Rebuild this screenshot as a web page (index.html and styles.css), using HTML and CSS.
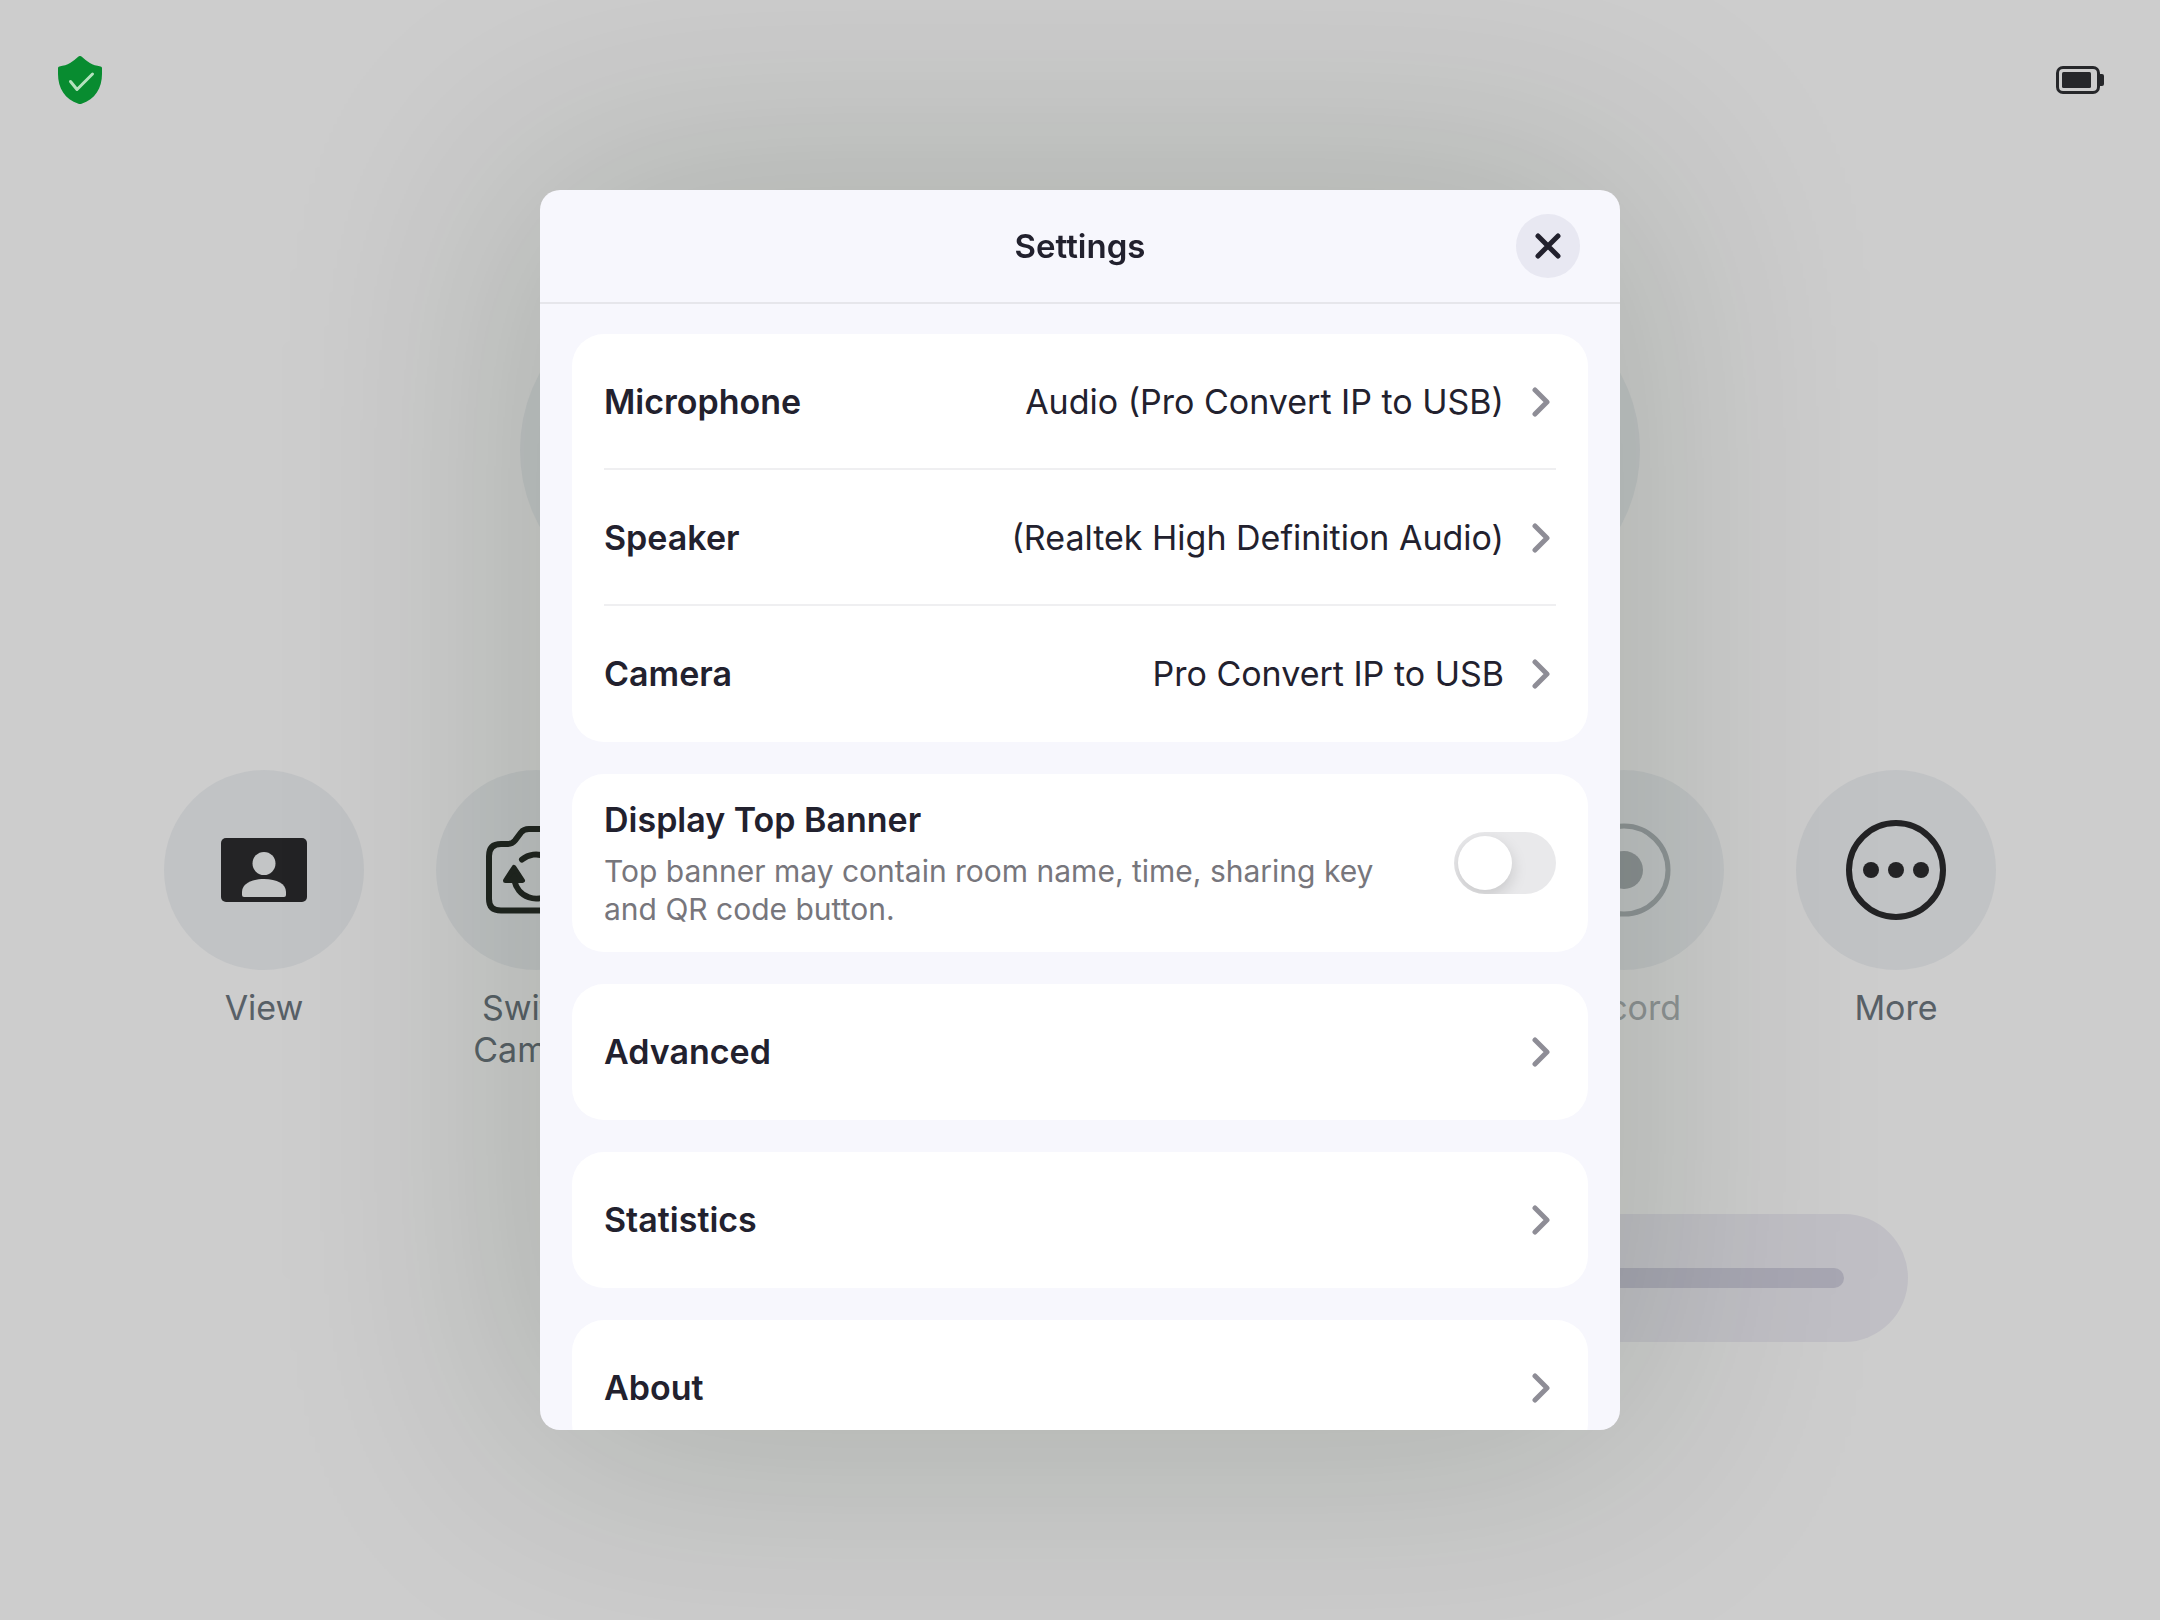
FILE: index.html
```html
<!DOCTYPE html>
<html lang="en">
<head>
<meta charset="utf-8">
<title>Settings</title>
<link rel="stylesheet" href="styles.css">
</head>
<body>
<div class="room">
  <header class="status">
    <svg class="shield" viewBox="0 0 44 48" role="img" aria-label="Encrypted">
      <path d="M20.500.600a2.300 2.300 0 0 1 3 0C29 5.600 34 9.600 42.600 10.400q1.400.100 1.400 1.600V18c0 14-7 25.500-20.400 29.700a5 5 0 0 1-3.200 0C7 43.500 0 32 0 18v-6q0-1.500 1.400-1.600C10 9.600 15 5.600 20.500.600z" fill="#088c30"/>
      <path d="M12.500 25.500l6.500 8L34.500 18" fill="none" stroke="#b4e2be" stroke-width="3" stroke-linecap="round" stroke-linejoin="round"/>
    </svg>
    <svg class="battery" viewBox="0 0 48 28" role="img" aria-label="Battery">
      <rect x="1.500" y="1.500" width="41" height="25" rx="5.500" fill="none" stroke="#26272a" stroke-width="3"/>
      <rect x="6" y="6" width="29" height="16" rx="1.500" fill="#26272a"/>
      <path d="M43 8h3a2 2 0 0 1 2 2v8a2 2 0 0 1-2 2h-3z" fill="#26272a"/>
    </svg>
  </header>
  <div class="stage"></div>
  <nav class="actions">
    <button class="action action-view" type="button">
      <span class="disc">
        <svg viewBox="0 0 100 100" aria-hidden="true">
          <rect x="7" y="18" width="86" height="64" rx="5" fill="#232325"/>
          <circle cx="50" cy="43.500" r="11.500" fill="#c3c5c6"/>
          <path d="M28 75v-3c0-8 9-13 22-13s22 5 22 13v3q0 2-2 2H30q-2 0-2-2z" fill="#c3c5c6"/>
        </svg>
      </span>
      View
    </button>
    <button class="action action-switch" type="button">
      <span class="disc">
        <svg viewBox="0 0 100 100" fill="none" stroke="#202420" stroke-width="6" stroke-linecap="round" stroke-linejoin="round" aria-hidden="true">
          <path d="M43 9h14c4 0 6 1 8 3.500l6 8c2 2.500 4 3.500 7 3.500h7c8 0 12 4 12 12V79c0 8-4 11.500-12 11.500H15C7 90.500 3 87 3 79V36c0-8 4-12 12-12h7c3 0 5-1 7-3.500l6-8c2-2.500 4-3.500 8-3.500z"/>
          <path d="M36 39.500a22 22 0 0 1 36 17M28.500 61a22 22 0 0 0 35.500 12.500"/>
          <path d="M28 47.500l8.500 13h-17z" fill="#202420" stroke-width="5"/>
        </svg>
      </span>
      Switch Camera
    </button>
    <button class="action action-record" type="button" disabled>
      <span class="disc">
        <svg viewBox="0 0 100 100" aria-hidden="true">
          <circle cx="50" cy="50" r="44" fill="none" stroke="#8f9497" stroke-width="5"/>
          <circle cx="50" cy="50" r="19" fill="#8b9093"/>
        </svg>
      </span>
      Record
    </button>
    <button class="action action-more" type="button">
      <span class="disc">
        <svg viewBox="0 0 100 100" fill="#232325" aria-hidden="true">
          <circle cx="50" cy="50" r="47" fill="none" stroke="#232325" stroke-width="6"/>
          <circle cx="25" cy="50" r="8"/><circle cx="50" cy="50" r="8"/><circle cx="75" cy="50" r="8"/>
        </svg>
      </span>
      More
    </button>
  </nav>
  <div class="volume">
    <input class="volume-range" type="range" min="0" max="100" value="0" aria-label="Volume">
  </div>
</div>

<div class="overlay">
  <section class="dialog" role="dialog" aria-modal="true" aria-labelledby="dialog-title">
    <header class="dialog-head">
      <h1 class="dialog-title" id="dialog-title">Settings</h1>
      <button class="close" type="button" aria-label="Close">
        <svg viewBox="0 0 24 24" aria-hidden="true"><path d="M2 2l20 20M22 2L2 22"/></svg>
      </button>
    </header>
    <div class="dialog-body">
      <div class="card">
        <button class="row" type="button">
          <span class="row-name">Microphone</span>
          <span class="row-value">Audio (Pro Convert IP to USB)</span>
          <svg class="chevron" viewBox="0 0 18 30" aria-hidden="true"><path d="M3 3l12 12L3 27"/></svg>
        </button>
        <button class="row" type="button">
          <span class="row-name">Speaker</span>
          <span class="row-value">(Realtek High Definition Audio)</span>
          <svg class="chevron" viewBox="0 0 18 30" aria-hidden="true"><path d="M3 3l12 12L3 27"/></svg>
        </button>
        <button class="row" type="button">
          <span class="row-name">Camera</span>
          <span class="row-value">Pro Convert IP to USB</span>
          <svg class="chevron" viewBox="0 0 18 30" aria-hidden="true"><path d="M3 3l12 12L3 27"/></svg>
        </button>
      </div>
      <div class="card banner">
        <div class="banner-text">
          <label class="row-name" for="top-banner">Display Top Banner</label>
          <p class="hint" id="banner-hint">Top banner may contain room name, time, sharing key and QR code button.</p>
        </div>
        <input class="switch" id="top-banner" type="checkbox" role="switch" aria-describedby="banner-hint">
      </div>
      <div class="card">
        <button class="row" type="button">
          <span class="row-name">Advanced</span>
          <svg class="chevron" viewBox="0 0 18 30" aria-hidden="true"><path d="M3 3l12 12L3 27"/></svg>
        </button>
      </div>
      <div class="card">
        <button class="row" type="button">
          <span class="row-name">Statistics</span>
          <svg class="chevron" viewBox="0 0 18 30" aria-hidden="true"><path d="M3 3l12 12L3 27"/></svg>
        </button>
      </div>
      <div class="card">
        <button class="row" type="button">
          <span class="row-name">About</span>
          <svg class="chevron" viewBox="0 0 18 30" aria-hidden="true"><path d="M3 3l12 12L3 27"/></svg>
        </button>
      </div>
    </div>
  </section>
</div>
</body>
</html>
```
FILE: styles.css
```css
* {
  box-sizing: border-box;
}

body {
  margin: 0;
  min-height: 100vh;
  overflow: hidden;
  background: #cdcdcd;
  color: #22212e;
  font-family: Inter, "Liberation Sans", sans-serif;
  font-size: 34px;
}

button {
  padding: 0;
  border: 0;
  background: none;
  color: inherit;
  font: inherit;
}

/* Room controls behind the dialog */
.room {
  display: flex;
  flex-direction: column;
  align-items: center;
}

.status {
  display: flex;
  align-self: stretch;
  align-items: center;
  justify-content: space-between;
  height: 160px;
  padding: 0 56px 0 58px;
}

.shield {
  width: 44px;
  height: 48px;
}

.battery {
  width: 48px;
  height: 28px;
}

.stage {
  width: 1120px;
  height: 320px;
  margin-top: 130px;
  border-radius: 160px;
  background: #c1c4c6;
}

.actions {
  display: grid;
  grid-template-columns: repeat(7, 200px);
  gap: 72px;
  justify-content: center;
  height: 324px;
  margin-top: 160px;
}

.action {
  display: flex;
  flex-direction: column;
  align-items: center;
  gap: 17px;
  color: #586067;
  line-height: 42px;
}

.action-view { grid-column: 1; }
.action-switch { grid-column: 2; }
.action-record { grid-column: 6; }
.action-more { grid-column: 7; }

.action:disabled {
  color: #8f9395;
}

.disc {
  display: grid;
  place-items: center;
  width: 200px;
  height: 200px;
  border-radius: 50%;
  background: #c1c3c5;
}

.disc svg {
  width: 100px;
  height: 100px;
}

.volume {
  display: flex;
  align-items: center;
  width: 1656px;
  height: 128px;
  margin-top: 120px;
  padding: 0 64px 0 400px;
  border-radius: 64px;
  background: linear-gradient(90deg, transparent 30%, #c0bfc5 30%);
}

.volume-range {
  flex: 1;
  height: 20px;
  margin: 0;
  border-radius: 10px;
  background: #a8a7b3;
  appearance: none;
}

.volume-range::-webkit-slider-thumb {
  width: 20px;
  height: 20px;
  border-radius: 50%;
  background: #a8a7b3;
  appearance: none;
}

/* Settings dialog */
.overlay {
  position: fixed;
  inset: 0;
  display: grid;
  place-items: center;
}

.dialog {
  display: flex;
  flex-direction: column;
  width: 50%;
  height: calc(100% - 380px);
  overflow: hidden;
  border-radius: 20px;
  background: #f7f7fd;
  box-shadow: 0 0 290px 10px rgba(10, 35, 5, 0.18);
}

.dialog-head {
  display: grid;
  grid-template-columns: 1fr auto 1fr;
  flex: none;
  align-items: center;
  height: 114px;
  padding: 0 40px;
  border-bottom: 2px solid #e6e6eb;
}

.dialog-title {
  grid-column: 2;
  margin: 0;
  font-size: 33px;
  font-weight: 600;
}

.close {
  display: grid;
  place-items: center;
  justify-self: end;
  width: 64px;
  height: 64px;
  border-radius: 50%;
  background: #e8e8f2;
}

.close svg {
  width: 24px;
  height: 24px;
  overflow: visible;
  stroke: #22212e;
  stroke-width: 5;
  stroke-linecap: round;
}

.dialog-body {
  display: flex;
  flex: 1;
  flex-direction: column;
  gap: 32px;
  min-height: 0;
  padding: 30px 32px;
  overflow: hidden;
}

.card {
  flex: none;
  padding: 0 32px;
  border-radius: 32px;
  background: #fff;
}

.row {
  display: flex;
  align-items: center;
  width: 100%;
  height: 136px;
  padding-right: 6px;
  text-align: left;
}

.row:not(:last-child) {
  box-shadow: inset 0 -2px #efeff1;
}

.row-name,
.row-value {
  padding-bottom: 2px;
}

.row-name {
  font-weight: 600;
}

.row-value,
.row > .chevron {
  margin-left: auto;
}

.row-value + .chevron {
  margin-left: 28px;
}

.chevron {
  flex: none;
  width: 18px;
  height: 30px;
  fill: none;
  stroke: #8e8d96;
  stroke-width: 5;
  stroke-linecap: round;
  stroke-linejoin: round;
}

.banner {
  display: flex;
  align-items: center;
  justify-content: space-between;
  gap: 40px;
  height: 178px;
}

.banner-text {
  flex: 1;
  max-width: 800px;
}

.hint {
  margin: 12px 0 0;
  color: #77767c;
  font-size: 30px;
  line-height: 38px;
}

.switch {
  width: 102px;
  height: 62px;
  margin: 0;
  padding: 4px;
  border-radius: 31px;
  background: #e9e9eb;
  overflow: hidden;
  appearance: none;
}

.switch::before {
  display: block;
  width: 54px;
  height: 54px;
  border-radius: 50%;
  background: #fff;
  box-shadow: 0 6px 16px rgba(0, 0, 0, 0.15);
  content: "";
}

.switch:checked {
  background: #34c759;
}

.switch:checked::before {
  margin-left: auto;
}
```
